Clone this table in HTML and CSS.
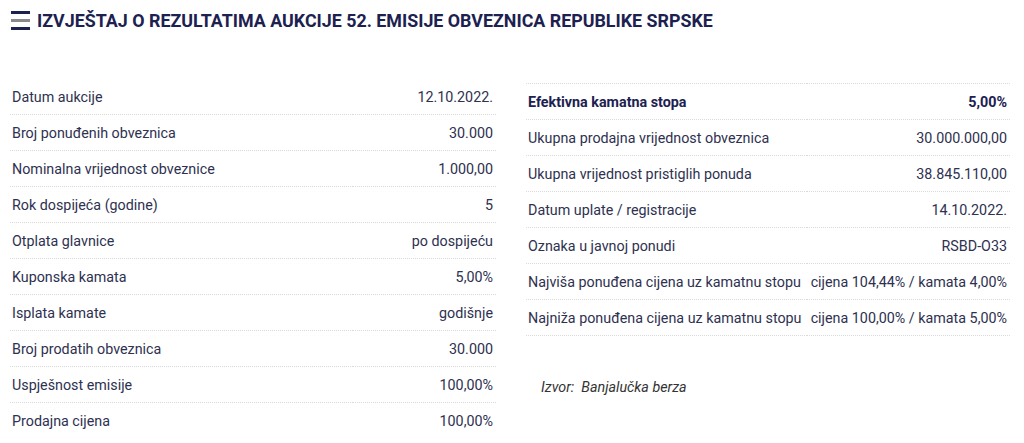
FILE: index.html
```html
<!DOCTYPE html>
<html lang="sr">
<head>
<meta charset="utf-8">
<title>Izvještaj</title>
<link rel="stylesheet" href="styles.css">
</head>
<body>
<header class="head">
  <svg class="burger" width="20" height="19" viewBox="0 0 20 19">
    <rect x="0" y="0" width="19" height="3" fill="#1c2150"/>
    <rect x="0" y="8" width="19" height="3" fill="#8a8a8a"/>
    <rect x="0" y="16" width="19" height="3" fill="#1c2150"/>
  </svg>
  <h1 class="title">IZVJEŠTAJ O REZULTATIMA AUKCIJE 52. EMISIJE OBVEZNICA REPUBLIKE SRPSKE</h1>
</header>
<main class="cols">
  <section class="col col-left">
    <table class="data">
      <tr><td>Datum aukcije</td><td class="v">12.10.2022.</td></tr>
      <tr><td>Broj ponuđenih obveznica</td><td class="v">30.000</td></tr>
      <tr><td>Nominalna vrijednost obveznice</td><td class="v">1.000,00</td></tr>
      <tr><td>Rok dospijeća (godine)</td><td class="v">5</td></tr>
      <tr><td>Otplata glavnice</td><td class="v">po dospijeću</td></tr>
      <tr><td>Kuponska kamata</td><td class="v">5,00%</td></tr>
      <tr><td>Isplata kamate</td><td class="v">godišnje</td></tr>
      <tr><td>Broj prodatih obveznica</td><td class="v">30.000</td></tr>
      <tr><td>Uspješnost emisije</td><td class="v">100,00%</td></tr>
      <tr class="last"><td>Prodajna cijena</td><td class="v">100,00%</td></tr>
    </table>
  </section>
  <section class="col col-right">
    <table class="data data-top">
      <tr class="strong"><td>Efektivna kamatna stopa</td><td class="v">5,00%</td></tr>
      <tr><td>Ukupna prodajna vrijednost obveznica</td><td class="v">30.000.000,00</td></tr>
      <tr><td>Ukupna vrijednost pristiglih ponuda</td><td class="v">38.845.110,00</td></tr>
      <tr><td>Datum uplate / registracije</td><td class="v">14.10.2022.</td></tr>
      <tr><td>Oznaka u javnoj ponudi</td><td class="v">RSBD-O33</td></tr>
      <tr><td>Najviša ponuđena cijena uz kamatnu stopu</td><td class="v">cijena 104,44% / kamata 4,00%</td></tr>
      <tr><td>Najniža ponuđena cijena uz kamatnu stopu</td><td class="v">cijena 100,00% / kamata 5,00%</td></tr>
    </table>
    <p class="source">Izvor:&nbsp; Banjalučka berza</p>
  </section>
</main>
</body>
</html>
```

FILE: styles.css
```css
html, body {
  margin: 0;
  padding: 0;
  background: #fff;
}
body {
  font-family: Roboto, "Liberation Sans", Arial, sans-serif;
  color: #2e3150;
  font-size: 14.3px;
}
.head {
  display: flex;
  align-items: center;
  gap: 6px;
  padding: 10px 0 0 11px;
  height: 21px;
}
.burger {
  display: block;
  flex: none;
}
.title {
  margin: 0;
  font-size: 17.85px;
  font-weight: 700;
  color: #1c2150;
  line-height: 21px;
  letter-spacing: 0;
}
.cols {
  display: grid;
  grid-template-columns: 486px 484px;
  column-gap: 30px;
  padding: 48px 0 0 10px;
}
.data {
  width: 100%;
  border-collapse: collapse;
}
.data td {
  height: 35px;
  padding: 0 3px 0 2px;
  border-bottom: 1px dotted #d9d9d9;
  vertical-align: middle;
  white-space: nowrap;
}
.data .last td {
  border-bottom: none;
}
.data td.v {
  text-align: right;
}
.data-top {
  margin-top: 4px;
  border-top: 1px dotted #d9d9d9;
}
.strong td {
  font-weight: 700;
  color: #1c2150;
}
.source {
  margin: 43px 0 0 15px;
  font-style: italic;
  color: #333;
}
```
